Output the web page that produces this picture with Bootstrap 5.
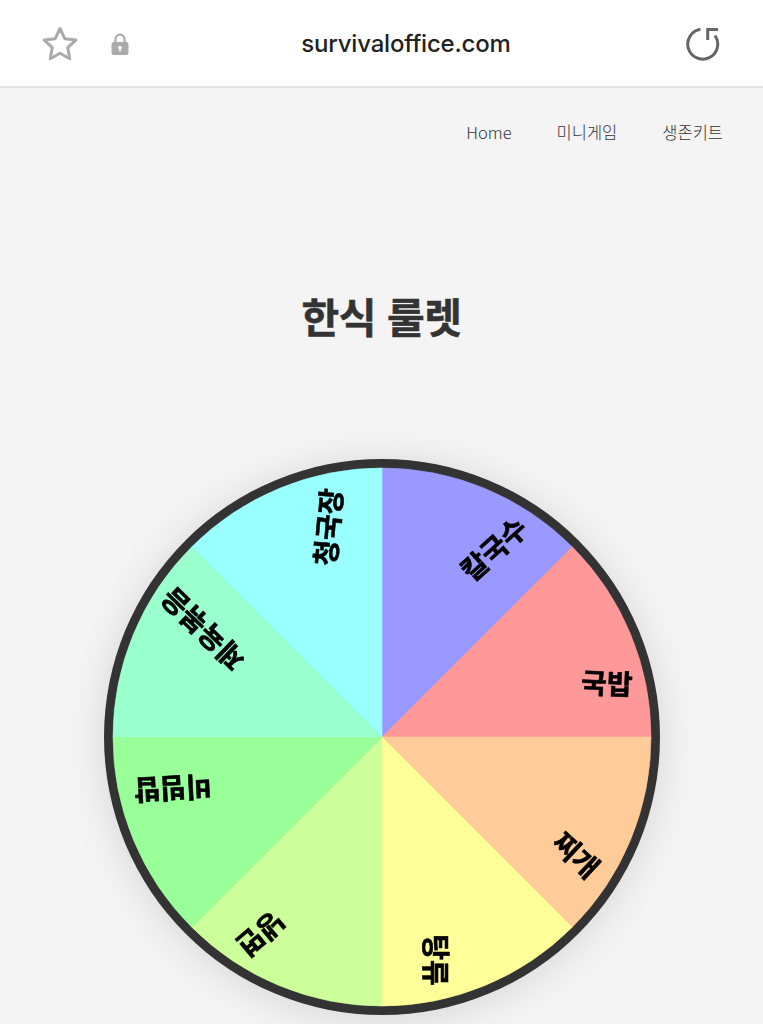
<!DOCTYPE html>
<html lang="ko">
<head>
<meta charset="utf-8">
<meta name="viewport" content="width=device-width, initial-scale=1">
<link href="https://cdn.jsdelivr.net/npm/bootstrap@5.3.0/dist/css/bootstrap.min.css" rel="stylesheet">
<style>
html,body{height:1024px;overflow:hidden;background:#f4f4f4}
body{font-family:"Noto Sans CJK KR","Noto Sans",sans-serif;color:#333}
.addr-bar{height:88px;background:#fff;border-bottom:2px solid #e3e3e3;padding:2px 42px 0}
.addr-left{width:137px;gap:32px}
.addr-url{font-family:Inter,"Liberation Sans",sans-serif;font-size:24px;font-weight:500;color:#222;letter-spacing:-.2px}
.addr-right{width:88px}
.site-links{height:90px;padding:32px 40px 0 0;gap:45px;font-size:16.5px;font-weight:300;color:#333;line-height:24px}
.site-links a{color:inherit;text-decoration:none}
.page-title{font-size:41px;font-weight:700;color:#333;line-height:56px;margin:109px 0 116px;letter-spacing:-.5px;-webkit-text-stroke:.5px #333}
.wheel-holder{height:556px}
.wheel-svg{display:block;filter:drop-shadow(0 4px 20px rgba(0,0,0,.12));overflow:visible}
.wheel-label{font-family:"Noto Sans CJK KR",sans-serif;font-size:28px;font-weight:700;fill:#000;stroke:#000;stroke-width:.6px;stroke-linejoin:round;text-anchor:middle;dominant-baseline:central}
.wheel-slice{stroke-width:.6px}
</style>
</head>
<body>
<header class="addr-bar d-flex align-items-center justify-content-between">
  <div class="addr-left d-flex align-items-center">
    <svg width="36" height="36" viewBox="0 0 36 36" fill="none" stroke="#aaa" stroke-width="3" stroke-linejoin="round"><path d="M18 2.5l4.8 10.2 11 1.4-8.1 7.6 2.1 11-9.8-5.4-9.8 5.4 2.1-11-8.1-7.6 11-1.4z"/></svg>
    <svg width="20" height="24" viewBox="0 0 20 24"><path d="M5.5 11V7.2a4.5 4.5 0 0 1 9 0V11" fill="none" stroke="#aaa" stroke-width="2.2"/><rect x="1.5" y="10" width="17" height="13" rx="2.5" fill="#aaa"/><circle cx="10" cy="15.5" r="1.8" fill="#fff"/><rect x="9.2" y="15.5" width="1.6" height="4" fill="#fff"/></svg>
  </div>
  <div class="addr-url">survivaloffice.com</div>
  <div class="addr-right d-flex justify-content-end">
    <svg width="36" height="36" viewBox="0 0 36 36" fill="none" stroke="#666" stroke-width="3"><path d="M15.5 3.3A15 15 0 1 0 30 9.5"/><path d="M33 3.5H22.7V14"/></svg>
  </div>
</header>
<nav class="site-links d-flex justify-content-end">
  <a href="#">Home</a><a href="#">미니게임</a><a href="#">생존키트</a>
</nav>
<h1 class="page-title text-center">한식 룰렛</h1>
<div class="wheel-holder d-flex justify-content-center">
<svg class="wheel-svg" width="556" height="556" viewBox="-278 -278 556 556">
  <circle r="278" fill="#333"/>
  <path class="wheel-slice" d="M0 0V-269A269 269 0 0 1 190.2 -190.2Z" fill="#9999ff" stroke="#9999ff"/>
  <path class="wheel-slice" d="M0 0L190.2 -190.2A269 269 0 0 1 269 0Z" fill="#ff9999" stroke="#ff9999"/>
  <path class="wheel-slice" d="M0 0H269A269 269 0 0 1 190.2 190.2Z" fill="#ffcc99" stroke="#ffcc99"/>
  <path class="wheel-slice" d="M0 0L190.2 190.2A269 269 0 0 1 0 269Z" fill="#ffff99" stroke="#ffff99"/>
  <path class="wheel-slice" d="M0 0V269A269 269 0 0 1 -190.2 190.2Z" fill="#ccff99" stroke="#ccff99"/>
  <path class="wheel-slice" d="M0 0L-190.2 190.2A269 269 0 0 1 -269 0Z" fill="#99ff99" stroke="#99ff99"/>
  <path class="wheel-slice" d="M0 0H-269A269 269 0 0 1 -190.2 -190.2Z" fill="#99ffcc" stroke="#99ffcc"/>
  <path class="wheel-slice" d="M0 0L-190.2 -190.2A269 269 0 0 1 0 -269Z" fill="#99ffff" stroke="#99ffff"/>
  <text class="wheel-label" transform="translate(111 -189) rotate(-42)">칼국수</text>
  <text class="wheel-label" transform="translate(225 -55) rotate(2)">국밥</text>
  <text class="wheel-label" transform="translate(195 117) rotate(43)">찌개</text>
  <text class="wheel-label" transform="translate(55 223) rotate(90)">탕류</text>
  <text class="wheel-label" transform="translate(-120 198) rotate(140)">냉면</text>
  <text class="wheel-label" transform="translate(-209 53) rotate(177)">비빔밥</text>
  <text class="wheel-label" transform="translate(-180 -107) rotate(224)">제육볶음</text>
  <text class="wheel-label" transform="translate(-55 -210) rotate(275)">청국장</text>
</svg>
</div>
<script src="https://cdn.jsdelivr.net/npm/bootstrap@5.3.0/dist/js/bootstrap.bundle.min.js"></script>
</body>
</html>
